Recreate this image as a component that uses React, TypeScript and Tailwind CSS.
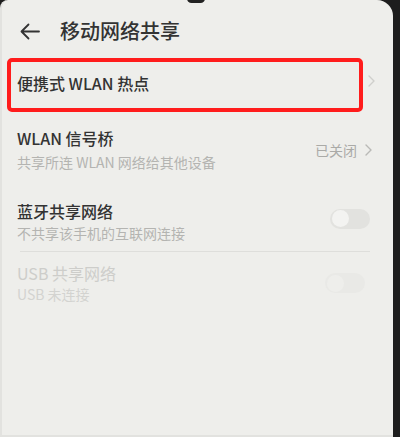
import React from 'react';

const font = { fontFamily: '"Noto Sans CJK SC", "Noto Sans", sans-serif' };

const Chevron = ({ color = '#b9b9b6' }: { color?: string }) => (
  <svg width="7" height="12" viewBox="0 0 7 12" fill="none">
    <path d="M1 1l5 5-5 5" stroke={color} strokeWidth="1.4" strokeLinecap="round" strokeLinejoin="round" />
  </svg>
);

const Toggle = ({ faint }: { faint?: boolean }) => (
  <div className={`w-[40px] h-[20px] rounded-full flex items-center pl-[2px] ${faint ? 'bg-[#e9e9e6]' : 'bg-[#e2e2df]'}`}>
    <div className={`w-[17px] h-[17px] rounded-full ${faint ? 'bg-[#eeeeeb]' : 'bg-[#f3f3f1]'}`} />
  </div>
);

export default function App() {
  return (
    <div className="relative w-[400px] h-[437px] bg-[#1d1d1d] flex overflow-hidden" style={font}>
      {/* screen */}
      <div className="w-[393px] h-full bg-[#eeeeeb] rounded-tr-[16px] rounded-tl-[8px] border-l-2 border-[#e2e2df] flex flex-col">
        {/* header */}
        <div className="h-[58px] pt-[4px] pl-[18px] flex items-center gap-[20px]">
          <svg width="20" height="17" viewBox="0 0 20 17" fill="none">
            <path d="M19 8.5H2M8.5 1.5L1.5 8.5l7 7" stroke="#333" strokeWidth="1.8" strokeLinecap="round" strokeLinejoin="round" />
          </svg>
          <span className="text-[20px] leading-[24px] font-medium text-[#333]">移动网络共享</span>
        </div>

        {/* portable hotspot, highlighted */}
        <div className="flex pl-[5px]">
          <div className="w-[356px] h-[54px] border-4 border-[#ff1c1c] rounded-[5px] pl-[6px] pb-[4px] flex items-center">
            <span className="text-[16px] leading-[22px] font-medium text-[#333]">便携式 WLAN 热点</span>
          </div>
          <div className="ml-[5px] mt-[17px]">
            <Chevron color="#cfcfcc" />
          </div>
        </div>

        {/* wlan bridge */}
        <div className="pt-[15px] pl-[15px] pr-[21px] flex items-center">
          <div className="flex-1">
            <div className="text-[16px] leading-[22px] font-medium text-[#333]">WLAN 信号桥</div>
            <div className="mt-[3px] text-[14px] leading-[20px] text-[#b4b4b1]">共享所连 WLAN 网络给其他设备</div>
          </div>
          <span className="text-[14px] leading-[20px] text-[#aaaaa7] mr-[8px]">已关闭</span>
          <Chevron />
        </div>

        {/* bluetooth */}
        <div className="mt-[28px] pl-[15px] pr-[23px] flex items-center">
          <div className="flex-1">
            <div className="text-[16px] leading-[22px] font-medium text-[#333]">蓝牙共享网络</div>
            <div className="mt-[1px] text-[14px] leading-[20px] text-[#b4b4b1]">不共享该手机的互联网连接</div>
          </div>
          <div className="mb-[6px]">
            <Toggle />
          </div>
        </div>

        <div className="mt-[8px] ml-[18px] mr-[23px] h-px bg-[#dededb]" />

        {/* usb, disabled */}
        <div className="mt-[10px] pl-[15px] pr-[28px] flex items-center">
          <div className="flex-1">
            <div className="text-[16px] leading-[22px] text-[#cdcdca]">USB 共享网络</div>
            <div className="text-[14px] leading-[20px] text-[#d3d3d0]">USB 未连接</div>
          </div>
          <Toggle faint />
        </div>

        <div className="flex-1" />
        <div className="h-[2px] bg-[#e2e2df]" />
      </div>

      {/* camera notch */}
      <div className="absolute top-[-6px] left-[187px] w-[18px] h-[9px] rounded-full bg-[#222]" />
    </div>
  );
}
